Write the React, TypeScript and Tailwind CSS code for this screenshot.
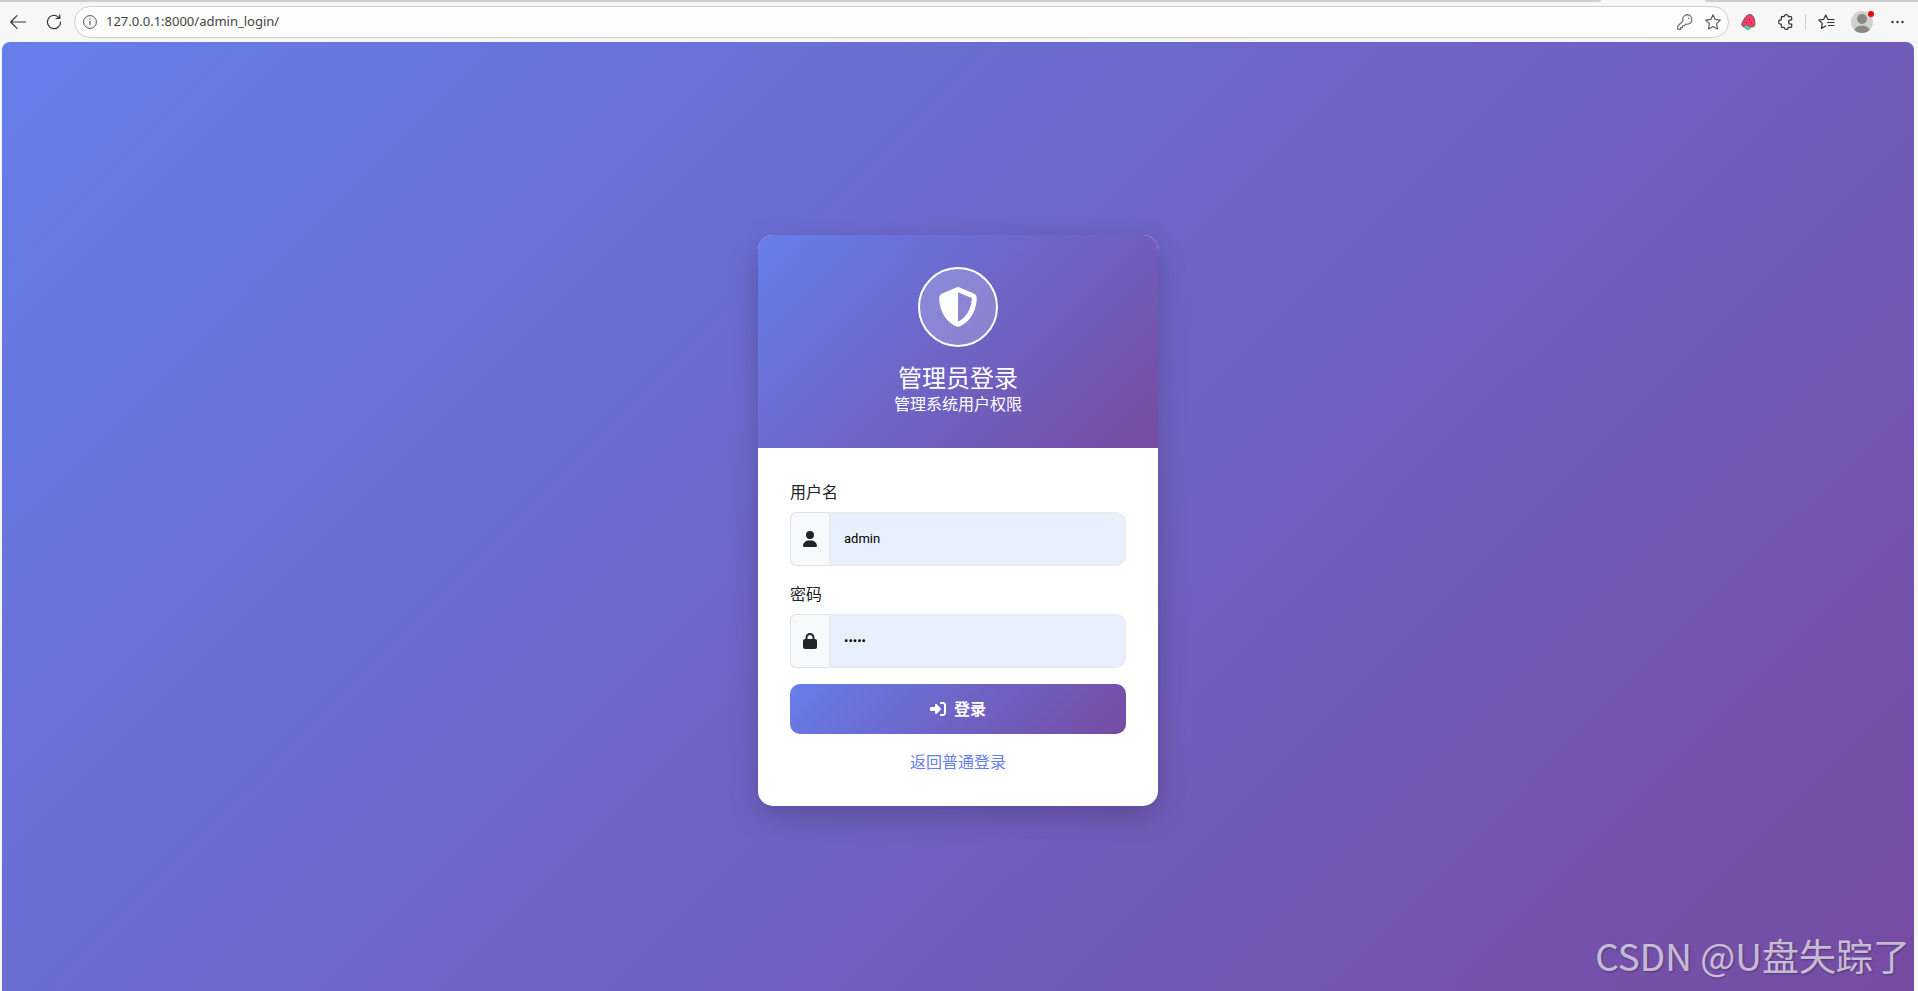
import { useState } from "react";
import { FaLock, FaRightToBracket, FaShieldHalved, FaUser } from "react-icons/fa6";

const iconButton = "flex items-center justify-center text-[#333333]";
const addon = "flex w-[39px] shrink-0 items-center justify-center rounded-l-md border border-r-0 border-[#dee2e6] bg-[#f8f9fa] text-base text-[#212529]";
const field = "w-full min-w-0 flex-1 rounded-r-[10px] border-2 border-[#e9ecef] bg-[#e8f0fe] px-[13px] py-[15px] font-[Roboto,'Noto_Sans_CJK_SC',sans-serif] text-[13px] leading-5 text-black outline-none focus:border-[#667eea]";

function BrowserBar() {
  return (
    <header className="bg-[#f7f7f7]">
      {/* bottom edge of the tab strip, open under the active tab */}
      <div className="flex h-0.5">
        <div className="flex-1 rounded-br-sm bg-[#cdcdcd]" />
        <div className="w-[104px]" />
        <div className="w-[213px] rounded-bl-sm bg-[#cdcdcd]" />
      </div>
      <div className="flex h-10 items-center">
        <button aria-label="Back" className={`${iconButton} ml-2 h-6 w-5`}>
          <svg width="16" height="14" viewBox="0 0 16 14" fill="none" stroke="currentColor" strokeWidth="1.1" strokeLinecap="round" strokeLinejoin="round">
            <path d="M15.5 7H.8M7 .7.7 7 7 13.3" />
          </svg>
        </button>
        <button aria-label="Refresh" className={`${iconButton} ml-4 h-6 w-5`}>
          <svg width="16" height="16" viewBox="0 0 16 16" fill="none" stroke="currentColor" strokeWidth="1.2" strokeLinecap="round" strokeLinejoin="round">
            <path d="M14.6 8A6.6 6.6 0 1 1 12.2 2.9L13.7 4.3M13.8.8v3.6h-3.6" />
          </svg>
        </button>
        <div className="ml-[10px] flex h-8 flex-1 items-center rounded-full border border-[#cfcfcf] bg-[#fdfdfd] pr-[7px] pl-2">
          <svg width="14" height="14" viewBox="0 0 14 14" fill="none" stroke="#555555" className="shrink-0">
            <circle cx="7" cy="7" r="6.4" />
            <path d="M7 6v4M7 3.6v1.2" strokeWidth="1.2" />
          </svg>
          <input
            aria-label="Address"
            defaultValue="127.0.0.1:8000/admin_login/"
            className="ml-[9px] min-w-0 flex-1 bg-transparent text-[13px] text-[#444444] outline-none"
          />
          <button aria-label="Passwords" className="text-[#666666]">
            <svg width="16" height="16" viewBox="0 0 16 16" fill="none" stroke="currentColor" strokeWidth="1.1" strokeLinejoin="round">
              <path d="M10.6.6a4.8 4.8 0 0 0-4.6 6.2L.9 12a1.2 1.2 0 0 0-.3.8v1.8c0 .5.3.8.8.8h2.2v-1.8h1.8v-1.8h1.8l1.6-1.8a4.8 4.8 0 1 0 1.8-9.4Z" />
              <circle cx="11.8" cy="4.2" r=".8" fill="currentColor" stroke="none" />
            </svg>
          </button>
          <button aria-label="Add to favorites" className="ml-3 text-[#555555]">
            <svg width="16" height="16" viewBox="0 0 16 16" fill="none" stroke="currentColor" strokeWidth="1.1" strokeLinejoin="round">
              <path d="m8 .7 2.2 4.7 5.1.7-3.7 3.6.9 5.2L8 12.5l-4.5 2.4.9-5.2L.7 6.1l5.1-.7Z" />
            </svg>
          </button>
        </div>
        <button aria-label="Strawberry extension" className="ml-3">
          <svg width="15" height="16" viewBox="0 0 15 16">
            <path d="M8.5.6c2.3-.2 3.7 1.4 4.5 3.6.8 2.3 1.2 5.3.6 7.4-.3 1-1.5 1.4-3 1.4-2.6 0-6.4.4-8.8-.8C.6 11.6.6 10.3 1.2 9 2.6 5.8 5 .9 8.5.6Z" fill="#fb3c67" stroke="#5b4a50" strokeWidth=".9" />
            <path d="M3 12c1.6-1 3.6-.9 4.6.1 1.2.1 2 .6 1.9 1.4-.2 1.1-1.5 2-2.9 2-1.2 0-1.7-.6-1.9-1.2-1-.2-2.2-1.3-1.7-2.3Z" fill="#5fcfae" stroke="#3e6b60" strokeWidth=".6" />
            <path d="M5.5 8v1.2M8.5 5.2v1.2M10.5 8v1.2" stroke="#7a2038" />
          </svg>
        </button>
        <button aria-label="Extensions" className={`${iconButton} ml-[22px]`}>
          <svg width="16" height="16" viewBox="0 0 16 16" fill="none" stroke="currentColor" strokeWidth="1.2" strokeLinejoin="round">
            <path d="M3.4 2.6h2.8a2 2 0 0 1 4 0h2.6c.6 0 .9.3.9.9v2.3h-.9a2.2 2.2 0 0 0 0 4.4h.9v2.3c0 .6-.3.9-.9.9h-2.6a2 2 0 0 1-4 0H4.3c-.6 0-.9-.3-.9-.9v-2.3h-.6a2.2 2.2 0 0 1 0-4.4h.6Z" />
          </svg>
        </button>
        <span className="ml-[11px] h-4 w-px bg-[#cfcfcf]" />
        <button aria-label="Favorites" className={`${iconButton} ml-3`}>
          <svg width="17" height="16" viewBox="0 0 17 16" fill="none" stroke="currentColor" strokeWidth="1.2" strokeLinejoin="round" strokeLinecap="round">
            <path d="M11 5.5 9.8 5.3 7.8 1 5.7 5.3.8 6l3.5 3.4-.9 5 4.4-2.4M10.5 5.5H16M9.5 8.5H16M10.5 11.5H16" />
          </svg>
        </button>
        <button aria-label="Profile" className="ml-4">
          <svg width="24" height="24" viewBox="0 0 24 24">
            <clipPath id="avatar"><circle cx="11" cy="12" r="11" /></clipPath>
            <g clipPath="url(#avatar)">
              <rect width="22" height="24" fill="#d2d0ce" />
              <circle cx="11" cy="9" r="5" fill="#8a8886" />
              <ellipse cx="11" cy="21.5" rx="8" ry="6" fill="#8a8886" />
            </g>
            <circle cx="20" cy="4" r="3" fill="#e00b0b" />
          </svg>
        </button>
        <button aria-label="Settings and more" className={`${iconButton} mr-[14px] ml-4`}>
          <svg width="13" height="4" viewBox="0 0 13 4" fill="currentColor">
            <circle cx="1.5" cy="2" r="1.2" />
            <circle cx="6.5" cy="2" r="1.2" />
            <circle cx="11.5" cy="2" r="1.2" />
          </svg>
        </button>
      </div>
    </header>
  );
}

export default function App() {
  const [form, setForm] = useState({ username: "admin", password: "admin" });

  return (
    <div className="flex min-h-screen flex-col bg-[#f7f7f7] font-['Noto_Sans','Noto_Sans_CJK_SC',sans-serif]">
      <BrowserBar />
      <main className="relative mr-1 ml-0.5 flex flex-1 items-center justify-center rounded-t-lg bg-[linear-gradient(135deg,#667eea_0%,#764ba2_100%)] pt-2">
        <div className="w-full max-w-[400px] overflow-hidden rounded-[15px] bg-white shadow-[0_10px_30px_rgba(0,0,0,0.2)]">
          <div className="bg-[linear-gradient(135deg,#667eea_0%,#764ba2_100%)] p-8 text-center text-white">
            <div className="mx-auto mb-4 flex size-20 items-center justify-center rounded-full border-2 border-white bg-white/20">
              <FaShieldHalved className="size-10" />
            </div>
            <h1 className="text-2xl leading-[29px] font-normal">管理员登录</h1>
            <p className="text-base leading-6">管理系统用户权限</p>
          </div>

          <form className="p-8 text-base leading-6 text-[#212529]" onSubmit={(e) => e.preventDefault()}>
            <div className="mb-4">
              <label htmlFor="username" className="mb-2 block">用户名</label>
              <div className="flex">
                <span className={addon}><FaUser /></span>
                <input id="username" type="text" className={field} value={form.username} onChange={(e) => setForm({ ...form, username: e.target.value })} />
              </div>
            </div>
            <div className="mb-4">
              <label htmlFor="password" className="mb-2 block">密码</label>
              <div className="flex">
                <span className={addon}><FaLock /></span>
                <input id="password" type="password" className={field} value={form.password} onChange={(e) => setForm({ ...form, password: e.target.value })} />
              </div>
            </div>
            <button type="submit" className="flex h-[50px] w-full items-center justify-center gap-2 rounded-[10px] bg-[linear-gradient(135deg,#667eea_0%,#764ba2_100%)] font-bold text-white">
              <FaRightToBracket />
              登录
            </button>
            <div className="mt-4 text-center">
              <a href="#login" className="text-[#667eea]">返回普通登录</a>
            </div>
          </form>
        </div>
        <p className="absolute right-1 bottom-4 font-['Noto_Sans_CJK_SC',sans-serif] text-[37px] leading-10 text-white/65 [text-shadow:1px_1px_2px_rgba(0,0,0,0.3)]">
          CSDN @U盘失踪了
        </p>
      </main>
    </div>
  );
}
